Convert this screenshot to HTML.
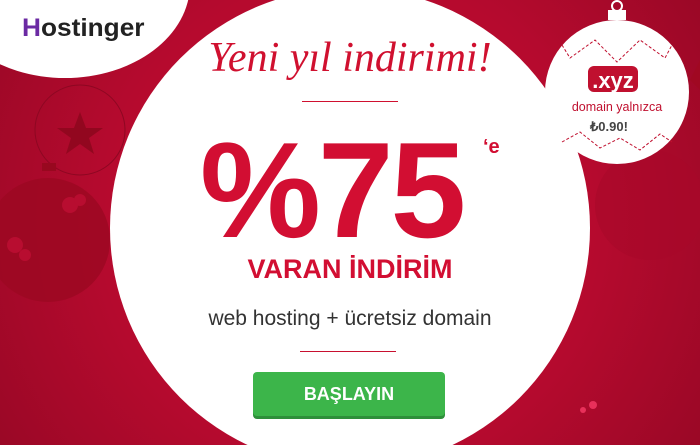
<!DOCTYPE html>
<html><head><meta charset="utf-8"><style>
html,body{margin:0;width:700px;height:445px;overflow:hidden}
body{position:relative;font-family:"Liberation Sans",sans-serif;background:radial-gradient(circle at 350px 220px,#cc1034 0%,#b50a2e 60%,#9a0826 100%)}
.a{position:absolute}
</style></head><body>
<svg class="a" style="left:0;top:0" width="700" height="445">
<circle cx="80" cy="130" r="45" fill="none" stroke="#8e0722" stroke-width="1"/>
<polygon points="80,112 86,128 103,128 89,138 94,154 80,144 66,154 71,138 57,128 74,128" fill="#92071f"/>
<rect x="42" y="163" width="14" height="8" fill="#98081f"/>
<circle cx="48" cy="240" r="62" fill="#9c0822" opacity=".85"/>
<circle cx="70" cy="205" r="8" fill="#b80d30"/><circle cx="80" cy="200" r="6" fill="#b80d30"/>
<circle cx="15" cy="245" r="8" fill="#b80d30"/><circle cx="25" cy="255" r="6" fill="#b80d30"/>
<polygon points="700,60 690,80 700,90" fill="#a00822"/>
<circle cx="650" cy="205" r="55" fill="#a8092a" opacity=".6"/>
<circle cx="593" cy="405" r="4" fill="#e8305a"/><circle cx="583" cy="410" r="3" fill="#e8305a"/>
</svg>
<div class="a" style="left:-60px;top:-110px;width:250px;height:188px;border-radius:50%;background:#fff"></div>
<div class="a" style="left:22px;top:14px;font-size:25px;font-weight:bold;color:#222;transform:scaleX(1.05);transform-origin:left"><span style="color:#6b2aa3">H</span>ostinger</div>
<div class="a" style="left:110px;top:-12px;width:480px;height:480px;border-radius:50%;background:#fff"></div>
<svg class="a" style="left:540px;top:0" width="160" height="180">
<circle cx="77" cy="6" r="5" fill="none" stroke="#fff" stroke-width="2"/>
<rect x="68" y="10" width="18" height="10" fill="#fff"/>
<circle cx="77" cy="92" r="72" fill="#fff"/>
<path d="M22,45 L30,58 L55,40 L77,62 L100,40 L125,58 L132,45" fill="none" stroke="#c0102f" stroke-dasharray="3 2"/>
<path d="M22,142 L40,132 L60,148 L80,138 L100,150 L120,134 L132,142" fill="none" stroke="#c0102f" stroke-dasharray="3 2"/>
<rect x="48" y="66" width="50" height="26" rx="6" fill="#c0102f"/>
<text x="73" y="88" text-anchor="middle" font-family="Liberation Sans" font-weight="bold" font-size="22" fill="#fff">.xyz</text>
<text x="77" y="111" text-anchor="middle" font-family="Liberation Sans" font-size="12.5" fill="#c0102f">domain yalnızca</text>
<text x="50" y="131" font-family="Liberation Sans" font-weight="bold" font-size="13" fill="#444">₺0.90!</text>
</svg>
<div class="a" style="left:180px;top:34px;width:340px;text-align:center;font-family:'Liberation Serif',serif;font-style:italic;font-size:42px;color:#d0102f">Yeni yıl indirimi!</div>
<div class="a" style="left:302px;top:101px;width:96px;height:1px;background:#d0102f"></div>
<div class="a" style="left:200px;top:115px;font-size:136px;font-weight:bold;color:#d20e32;letter-spacing:-3px;line-height:150px">%75</div>
<div class="a" style="left:483px;top:136px;font-size:20px;font-weight:bold;color:#d20e32">‘e</div>
<div class="a" style="left:180px;top:254px;width:340px;text-align:center;font-size:27px;font-weight:bold;color:#d20e32">VARAN İNDİRİM</div>
<div class="a" style="left:150px;top:307px;width:400px;text-align:center;font-size:21px;color:#333">web hosting + ücretsiz domain</div>
<div class="a" style="left:300px;top:351px;width:96px;height:1px;background:#c8102f"></div>
<div class="a" style="left:253px;top:372px;width:192px;height:44px;border-radius:4px;background:#3cb54a;box-shadow:0 3px 0 #2e8f3a;color:#fff;font-weight:bold;font-size:18px;text-align:center;line-height:44px">BAŞLAYIN</div>
</body></html>
